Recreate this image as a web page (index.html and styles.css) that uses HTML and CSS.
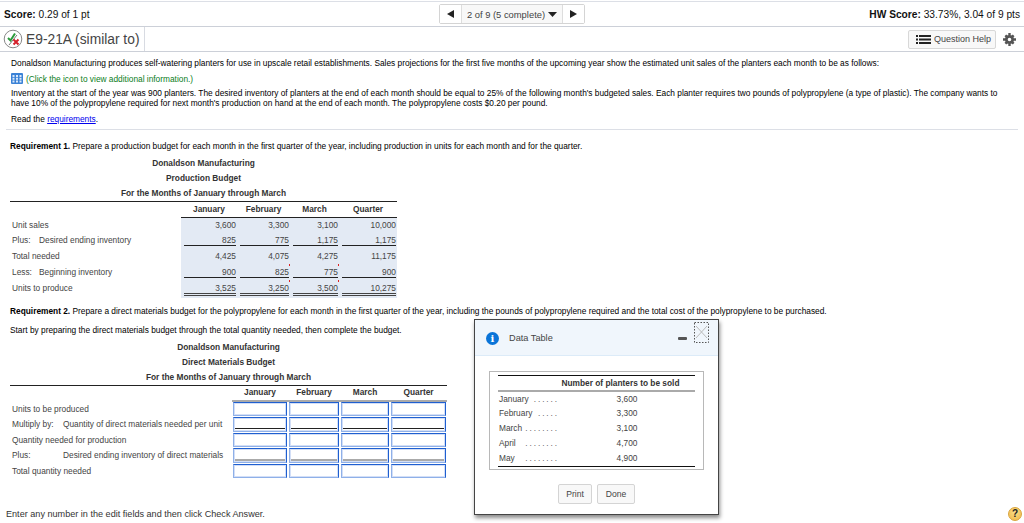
FILE: index.html
```html
<!DOCTYPE html>
<html lang="en">
<head>
<meta charset="utf-8">
<title>E9-21A</title>
<link rel="stylesheet" href="styles.css">
</head>
<body>
<div class="page">
  <header class="topbar">
    <div class="score"><b>Score:</b> 0.29 of 1 pt</div>
    <nav class="pager">
      <span class="pg-btn"><svg width="7" height="8" viewBox="0 0 7 8"><path d="M7 0v8L0 4z" fill="#222"/></svg></span>
      <span class="pg-mid">2 of 9 (5 complete) <svg width="9" height="5" viewBox="0 0 9 5"><path d="M0 0h9L4.500 5z" fill="#222"/></svg></span>
      <span class="pg-btn"><svg width="7" height="8" viewBox="0 0 7 8"><path d="M0 0v8l7-4z" fill="#222"/></svg></span>
    </nav>
    <div class="hw"><b>HW Score:</b> 33.73%, 3.04 of 9 pts</div>
  </header>
  <div class="titlebar">
    <div class="title">
      <svg class="status" width="20" height="20" viewBox="0 0 20 20"><circle cx="10" cy="10" r="8.800" fill="#fff" stroke="#888" stroke-width="1"/><path d="M5 9l2.500 2.500L12 4.500" fill="none" stroke="#2a9a3a" stroke-width="2"/><path d="M6 16L14 6" stroke="#777" stroke-width="1"/><path d="M10.500 10.500l5 5m0-5l-5 5" stroke="#d4202a" stroke-width="2"/></svg>
      <span class="title-text">E9-21A (similar to)</span>
    </div>
    <div class="tools">
      <span class="help"><svg width="15" height="9" viewBox="0 0 15 9"><path d="M0 0h2v2H0zM3 0h12v2H3zM0 3.500h2v2H0zM3 3.500h12v2H3zM0 7h2v2H0zM3 7h12v2H3z" fill="#222"/></svg>Question Help</span>
      <svg class="gear" width="13" height="13" viewBox="0 0 13 13"><circle cx="6.500" cy="6.500" r="3.200" fill="none" stroke="#555" stroke-width="2.800"/><path d="M5.300 0h2.400v2.500H5.300zM5.300 10.500h2.400V13H5.300zM0 5.300h2.500v2.400H0zM10.500 5.300H13v2.400h-2.500zM1.500 3.200L3.200 1.500 4.800 3.100 3.100 4.800zM9.800 1.500l1.700 1.700-1.600 1.600-1.700-1.700zM1.500 9.800l1.700 1.700 1.600-1.600-1.700-1.700zM11.500 9.800l-1.700 1.700-1.600-1.600 1.700-1.700z" fill="#555"/></svg>
    </div>
  </div>

  <section class="intro">
    <p class="p-first">Donaldson Manufacturing produces self-watering planters for use in upscale retail establishments. Sales projections for the first five months of the upcoming year show the estimated unit sales of the planters each month to be as follows:</p>
    <p class="p-click"><svg width="12" height="11" viewBox="0 0 12 11"><rect width="12" height="11" rx="1" fill="#3b82d6"/><path d="M1.500 2h2v2h-2zM5 2h2v2H5zM8.500 2h2v2h-2zM1.500 4.800h2v2h-2zM5 4.800h2v2H5zM8.500 4.800h2v2h-2zM1.500 7.600h2v2h-2zM5 7.600h2v2H5zM8.500 7.600h2v2h-2z" fill="#dbe9fa"/></svg><span>(Click the icon to view additional information.)</span></p>
    <p class="p-inv">Inventory at the start of the year was 900 planters. The desired inventory of planters at the end of each month should be equal to 25% of the following month's budgeted sales. Each planter requires two pounds of polypropylene (a type of plastic). The company wants to have 10% of the polypropylene required for next month's production on hand at the end of each month. The polypropylene costs $0.20 per pound.</p>
    <p class="p-read">Read the <a href="#">requirements</a>.</p>
  </section>

  <section class="answer">
    <p class="req"><b>Requirement 1.</b> Prepare a production budget for each month in the first quarter of the year, including production in units for each month and for the quarter.</p>
    <div class="budget b1">
      <div class="cap">Donaldson Manufacturing</div>
      <div class="cap">Production Budget</div>
      <div class="cap">For the Months of January through March</div>
      <table class="tbl t1">
        <colgroup><col class="c-l"><col class="c-a"><col class="c-b"><col class="c-c"><col class="c-d"></colgroup>
        <thead><tr><th></th><th>January</th><th>February</th><th>March</th><th>Quarter</th></tr></thead>
        <tbody>
          <tr><td class="lab">Unit sales</td><td class="n"><i>3,600</i></td><td class="n"><i>3,300</i></td><td class="n"><i>3,100</i></td><td class="n"><i>10,000</i></td></tr>
          <tr><td class="lab"><span class="pre p1">Plus:</span>Desired ending inventory</td><td class="n u"><i>825</i></td><td class="n u"><i>775</i></td><td class="n u"><i>1,175</i></td><td class="n u"><i>1,175</i></td></tr>
          <tr><td class="lab">Total needed</td><td class="n"><i>4,425</i></td><td class="n"><i>4,075</i></td><td class="n"><i>4,275</i></td><td class="n"><i>11,175</i></td></tr>
          <tr><td class="lab"><span class="pre p1">Less:</span>Beginning inventory</td><td class="n u"><i>900</i></td><td class="n u tick"><i>825</i></td><td class="n u tick"><i>775</i></td><td class="n u"><i>900</i></td></tr>
          <tr><td class="lab">Units to produce</td><td class="n d"><i>3,525</i></td><td class="n d tick"><i>3,250</i></td><td class="n d tick"><i>3,500</i></td><td class="n d"><i>10,275</i></td></tr>
        </tbody>
      </table>
    </div>

    <p class="req r2"><b>Requirement 2.</b> Prepare a direct materials budget for the polypropylene for each month in the first quarter of the year, including the pounds of polypropylene required and the total cost of the polypropylene to be purchased.</p>
    <p class="req r3">Start by preparing the direct materials budget through the total quantity needed, then complete the budget.</p>
    <div class="budget b2">
      <div class="cap">Donaldson Manufacturing</div>
      <div class="cap">Direct Materials Budget</div>
      <div class="cap">For the Months of January through March</div>
      <table class="tbl t2">
        <colgroup><col class="e-l"><col class="e-a"><col class="e-b"><col class="e-c"><col class="e-d"></colgroup>
        <thead><tr><th></th><th>January</th><th>February</th><th>March</th><th>Quarter</th></tr></thead>
        <tbody>
          <tr><td class="lab">Units to be produced</td><td class="f"><span></span></td><td class="f"><span></span></td><td class="f"><span></span></td><td class="f"><span></span></td></tr>
          <tr><td class="lab"><span class="pre p2">Multiply by:</span>Quantity of direct materials needed per unit</td><td class="f blk"><span></span></td><td class="f blk"><span></span></td><td class="f blk"><span></span></td><td class="f blk"><span></span></td></tr>
          <tr><td class="lab">Quantity needed for production</td><td class="f"><span></span></td><td class="f"><span></span></td><td class="f"><span></span></td><td class="f"><span></span></td></tr>
          <tr><td class="lab"><span class="pre p2">Plus:</span>Desired ending inventory of direct materials</td><td class="f gry"><span></span></td><td class="f gry"><span></span></td><td class="f gry"><span></span></td><td class="f gry"><span></span></td></tr>
          <tr><td class="lab">Total quantity needed</td><td class="f"><span></span></td><td class="f"><span></span></td><td class="f"><span></span></td><td class="f"><span></span></td></tr>
        </tbody>
      </table>
    </div>
    <p class="enter">Enter any number in the edit fields and then click Check Answer.</p>
  </section>

  <aside class="modal">
    <div class="m-head">
      <span class="info">i</span>
      <span class="m-title">Data Table</span>
      <span class="minus"></span>
      <svg class="close" width="15" height="21" viewBox="0 0 15 21"><rect x=".5" y=".5" width="14" height="20" fill="none" stroke="#555" stroke-dasharray="1.500 1.500"/><path d="M2 4l11 12M13 4L2 16" stroke="#bbb"/></svg>
    </div>
    <div class="m-body">
      <div class="m-box">
        <table class="m-tbl">
          <thead><tr><th></th><th>Number of planters to be sold</th></tr></thead>
          <tbody>
            <tr><td>January<em>......</em></td><td>3,600</td></tr>
            <tr><td>February<em>.....</em></td><td>3,300</td></tr>
            <tr><td>March<em>........</em></td><td>3,100</td></tr>
            <tr><td>April<em>........</em></td><td>4,700</td></tr>
            <tr><td>May<em>........</em></td><td>4,900</td></tr>
          </tbody>
        </table>
      </div>
      <div class="m-btns"><button type="button" class="b-print">Print</button><button type="button" class="b-done">Done</button></div>
    </div>
  </aside>
  <span class="q">?</span>
</div>
</body>
</html>
```
FILE: styles.css
```css
* { box-sizing: border-box; }
html, body { margin: 0; padding: 0; background: #fff; }
body { font-family: "Liberation Sans", Arial, sans-serif; color: #111; }
.page { position: relative; width: 1024px; height: 523px; overflow: hidden; font-size: 8.33px; }
p { margin: 0; }

.topbar { display: flex; align-items: center; justify-content: space-between; height: 26px; margin-top: 1px; border-top: 1px solid #dcdfe6; border-bottom: 1px solid #ccd0d8; padding: 0 4px; font-size: 10.2px; position: relative; }
.pager { position: absolute; left: 439px; top: 2px; height: 20px; display: flex; border: 1px solid #d4d4d4; border-radius: 2px; background: #fff; color: #444; }
.pg-btn { width: 21px; display: flex; align-items: center; justify-content: center; background: #fff; }
.pg-mid { width: 102px; display: flex; align-items: center; justify-content: center; gap: 3px; background: #f8f8f8; border-left: 1px solid #ddd; border-right: 1px solid #ddd; font-size: 9.4px; white-space: nowrap; }

.titlebar { display: flex; justify-content: space-between; align-items: stretch; height: 25px; border-bottom: 1px solid #ccd0d8; }
.title { display: flex; align-items: center; gap: 3px; padding: 0 3px; border-right: 1px solid #d8dbe2; font-size: 13.8px; color: #444; width: 145px; white-space: nowrap; }
.status { flex: none; }
.tools { display: flex; align-items: center; padding-right: 8px; gap: 7px; }
.help { display: flex; align-items: center; gap: 3px; width: 88px; height: 19px; padding-left: 7px; border: 1px solid #d8d8d8; border-radius: 2px; background: #f8f8f8; color: #444; font-size: 9px; white-space: nowrap; }

.intro { border-bottom: 1px solid #dcdfe6; margin: 0 0 0 6px; padding: 6px 17px 0 5px; width: 1012px; height: 78px; color: #000; }
.p-first { line-height: 11px; white-space: nowrap; }
.p-click { display: flex; align-items: center; gap: 3px; margin-top: 4px; height: 11px; color: #0a7d22; }
.p-inv { margin-top: 4px; line-height: 10px; }
.p-read { margin-top: 6px; line-height: 11px; }
.p-read a { color: #0000ee; }
.answer { margin: 0 0 0 10px; color: #000; }

.req { line-height: 11px; white-space: nowrap; }
.answer > .req:first-child { margin-top: 11px; }
.budget { color: #333; }
.cap { text-align: center; font-weight: bold; line-height: 15px; height: 15px; }
.b1 { width: 387px; margin-top: 4px; }
.b2 { width: 437px; margin-top: 4px; }
.r2 { margin-top: 8px; }
.r3 { margin-top: 8px; }

.tbl { border-collapse: separate; border-spacing: 0; table-layout: fixed; width: 100%; border-top: 1px solid #222; }
.tbl th { font-weight: bold; height: 16px; padding: 0 0 2px; text-align: center; color: #333; }
.t1 th + th { border-bottom: 1px solid #222; }
.t2 th + th { border-bottom: 2px solid #aaa; }
.tbl td { padding: 0; vertical-align: top; }
.c-l { width: 171px; } .c-a { width: 56px; } .c-b { width: 53px; } .c-c { width: 49px; } .c-d { width: 58px; }
.e-l { width: 222px; } .e-a { width: 56px; } .e-b { width: 52px; } .e-c { width: 50px; } .e-d { width: 57px; }

.tbl .lab { color: #444; padding: 2px 0 0 2px; line-height: 10px; white-space: nowrap; }
.pre { display: inline-block; }
.p1 { width: 27px; }
.p2 { width: 51px; }
.t1 tbody tr { height: 16px; }
.t1 tbody tr:first-child { height: 15px; }
.tbl .n { background: #e3eaf4; text-align: right; padding: 0 1px 0 3px; color: #444; }
.n i { font-style: normal; display: block; position: relative; line-height: 10px; padding-top: 2px; height: 13px; }
.u i { border-bottom: 1px solid #222; }
.d i { border-bottom: 3px double #444; height: 15px; }
.tbl .d { padding-bottom: 2px; }
.tick i::after { content: ""; position: absolute; right: -1px; top: -1px; width: 1px; height: 2px; background: #d22; }

.tbl .f { padding: 0 1px 1px 1px; }
.f span { display: block; height: 14px; border: 1px solid #1f5fd0; border-left-color: #8fb0e8; border-bottom-color: #8fb0e8; box-shadow: inset 0 0 0 1px rgba(110,150,230,.3); background: #fff; position: relative; }
.f.blk span, .f.gry span { height: 15px; }
.f.blk span::after, .f.gry span::after { content: ""; position: absolute; left: 1px; right: 1px; bottom: 2px; height: 1px; background: #222; }
.f.gry span::after { background: #aaa; height: 2px; bottom: 1px; }

.enter { position: absolute; left: 6px; top: 509px; line-height: 11px; color: #333; font-size: 9.1px; white-space: nowrap; }

.modal { position: absolute; left: 474px; top: 319px; width: 245px; height: 196px; background: #fff; border: 1px solid #444; box-shadow: 1px 3px 4px rgba(0,0,0,.45); color: #444; }
.m-head { position: relative; height: 36px; background: #f0f6fc; border-bottom: 1px solid #dcebf8; display: flex; align-items: center; padding: 1px 0 0 11px; gap: 10px; }
.info { width: 13px; height: 13px; border-radius: 50%; background: #0a74d8; color: #fff; font-family: "DejaVu Serif", serif; font-weight: bold; font-size: 10px; line-height: 13px; text-align: center; }
.m-title { font-size: 9.2px; }
.minus { position: absolute; left: 203px; top: 17px; width: 9px; height: 3px; border-radius: 1px; background: #555; }
.close { position: absolute; left: 219px; top: 2px; }
.m-body { padding: 15px 14px 0 14px; }
.m-box { border: 1px solid #b8b8b8; height: 99px; padding: 3px 8px 0 8px; }
.m-tbl { width: 197px; border-collapse: separate; border-spacing: 0; table-layout: fixed; border-top: 1px solid #111; border-bottom: 1px solid #111; }
.m-tbl th { font-weight: bold; height: 16px; padding: 0 13px 0 0; border-bottom: 2px solid #aaa; color: #333; white-space: nowrap; text-align: center; }
.m-tbl th:first-child { width: 61px; padding: 0; }
.m-tbl td { height: 15px; padding: 0 0 1px; text-align: center; }
.m-tbl tbody tr:first-child td { height: 14px; }
.m-tbl td:first-child { text-align: left; white-space: nowrap; padding-left: 1px; overflow: hidden; }
.m-tbl em { float: right; font-style: normal; letter-spacing: 1.9px; color: #666; }
.m-btns { display: flex; justify-content: center; gap: 5px; margin-top: 14px; }
.m-btns button { height: 20px; padding: 0; font: 8.6px "Liberation Sans", Arial, sans-serif; color: #444; background: #f8f8f8; border: 1px solid #d4d4d4; border-radius: 2px; }
.b-print { width: 34px; }
.b-done { width: 38px; }
.q { position: absolute; left: 1008px; top: 507px; width: 14px; height: 14px; border-radius: 50%; background: radial-gradient(circle at 50% 35%, #fbe08a, #f0b545); border: 1px solid #d9a43a; color: #222; font-size: 10px; font-weight: bold; line-height: 12px; text-align: center; }
```
